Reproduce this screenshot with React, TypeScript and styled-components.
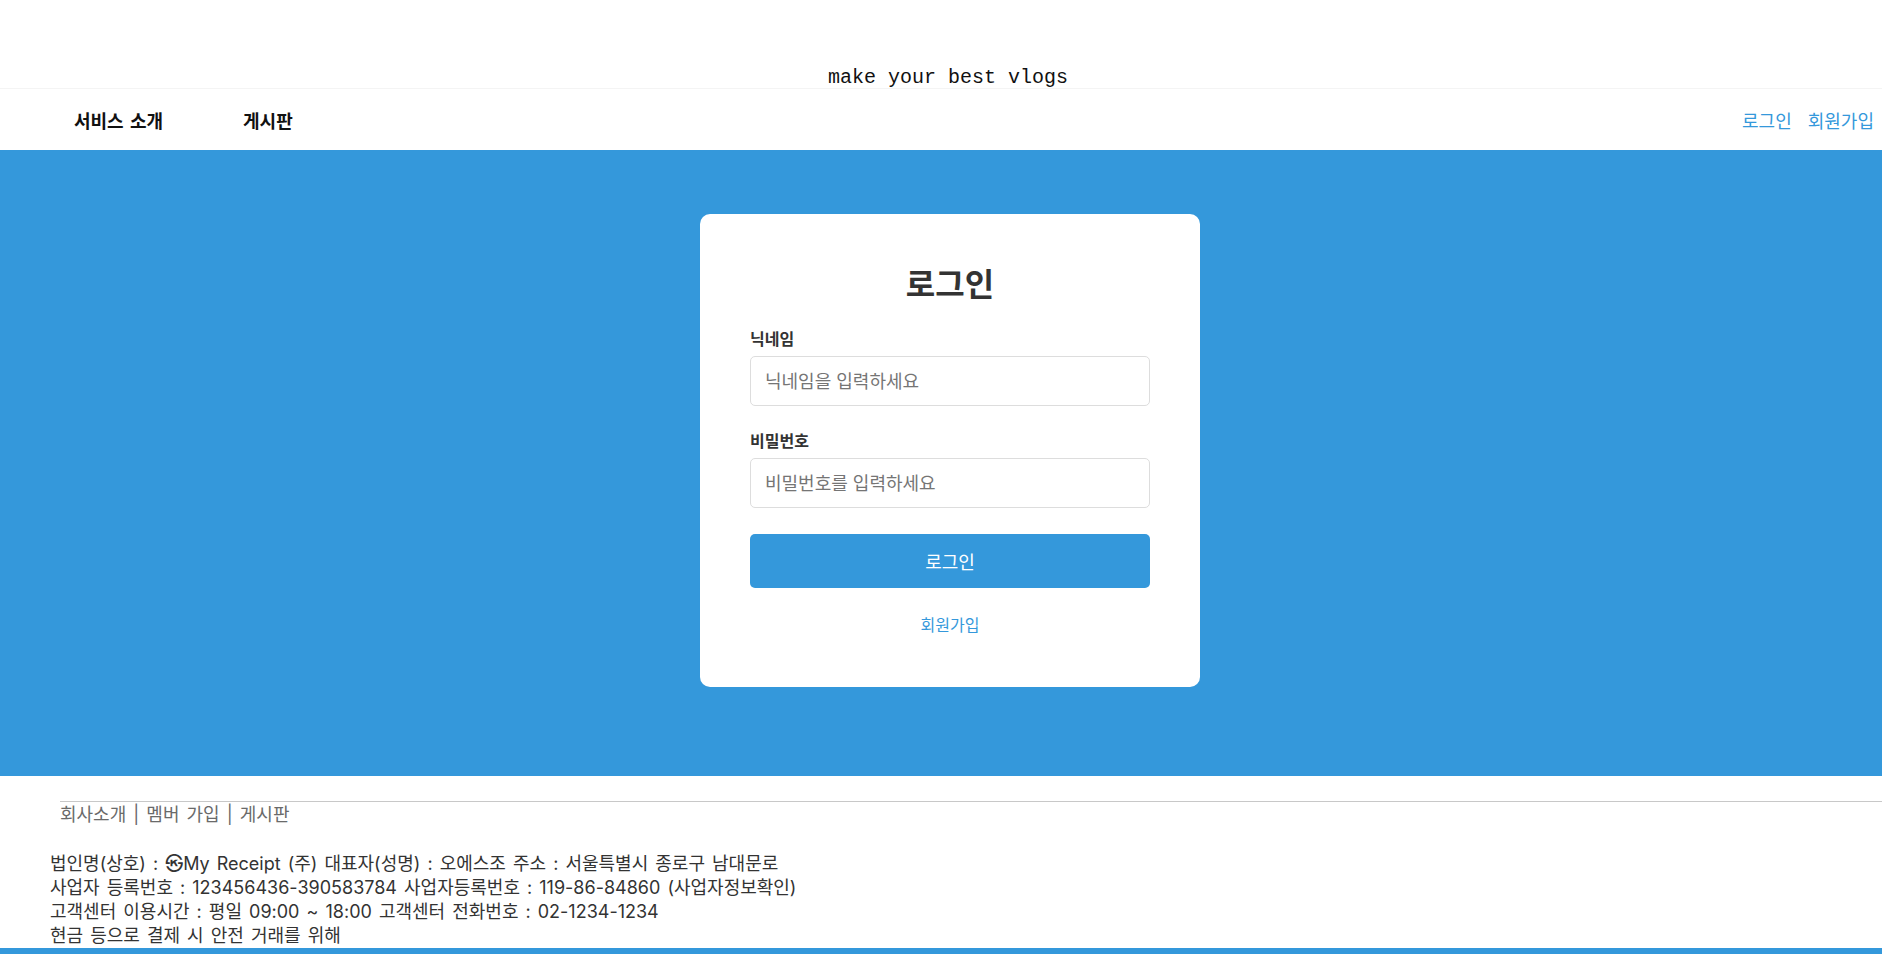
import React from "react";
import styled, { createGlobalStyle } from "styled-components";

const GlobalStyle = createGlobalStyle`
  html, body {
    margin: 0;
    padding: 0;
    background: #ffffff;
    font-family: "Inter", "Noto Sans CJK KR", sans-serif;
    color: #333333;
  }
  * { box-sizing: border-box; }
`;

const Page = styled.div`
  width: 100%;
  overflow: hidden;
`;

const Header = styled.header`
  height: 88px;
  display: flex;
  align-items: flex-end;
  justify-content: center;
  padding-left: 14px;
`;

const Slogan = styled.p`
  margin: 0 0 -1px 0;
  font-family: "Liberation Mono", "Courier New", monospace;
  font-size: 20px;
  line-height: 22px;
  color: #111111;
`;

const Nav = styled.nav`
  height: 62px;
  display: flex;
  align-items: center;
  justify-content: space-between;
  border-top: 1px solid #f4f4f4;
  padding: 0 8px 0 74px;
`;

const NavGroup = styled.div<{ $gap: number }>`
  display: flex;
  align-items: center;
  gap: ${(p) => p.$gap}px;
`;

const NavItem = styled.a`
  font-size: 18px;
  font-weight: 700;
  color: #111111;
  text-decoration: none;
  word-spacing: 2px;
  cursor: pointer;
`;

const NavLink = styled.a`
  font-size: 18px;
  font-weight: 400;
  color: #3498db;
  text-decoration: none;
  cursor: pointer;
`;

const Main = styled.main`
  background: #3498db;
  padding: 64px 0 89px 18px;
  display: flex;
  justify-content: center;
`;

const Card = styled.div`
  width: 500px;
  background: #ffffff;
  border-radius: 10px;
  padding: 50px 50px 50px;
`;

const Title = styled.h2`
  margin: 0 0 22px;
  text-align: center;
  font-size: 32px;
  line-height: 42px;
  font-weight: 700;
  color: #333333;
`;

const Group = styled.div<{ $mb: number }>`
  margin-bottom: ${(p) => p.$mb}px;
`;

const Label = styled.label`
  display: block;
  font-size: 16px;
  line-height: 23px;
  font-weight: 700;
  color: #333333;
  margin-bottom: 5px;
`;

const Input = styled.input`
  display: block;
  width: 100%;
  height: 50px;
  padding: 0 14px;
  border: 1px solid #dddddd;
  border-radius: 5px;
  font-family: "Inter", "Noto Sans CJK KR", sans-serif;
  font-size: 18px;
  color: #333333;
  outline: none;
  &::placeholder {
    color: #757575;
  }
`;

const Button = styled.button`
  display: block;
  width: 100%;
  height: 54px;
  border: none;
  border-radius: 5px;
  background: #3498db;
  color: #ffffff;
  font-family: "Inter", "Noto Sans CJK KR", sans-serif;
  font-size: 18px;
  cursor: pointer;
`;

const SignupRow = styled.div`
  margin-top: 26px;
  text-align: center;
  line-height: 23px;
`;

const SignupLink = styled.a`
  font-size: 16px;
  color: #3498db;
  text-decoration: none;
  cursor: pointer;
`;

const Footer = styled.footer`
  padding-top: 25px;
`;

const Rule = styled.hr`
  margin: 0 0 0 60px;
  border: none;
  border-top: 1px solid #c8c8c8;
  height: 0;
`;

const FooterLinks = styled.div`
  margin-left: 60px;
  font-size: 18px;
  line-height: 25px;
  word-spacing: 2px;
  color: #6a6a6a;
`;

const Info = styled.div`
  margin: 25px 0 0 50px;
  font-size: 18px;
  word-spacing: 2px;
  color: #333333;
  line-height: 24px;
`;

const BottomBar = styled.div`
  height: 6px;
  background: #3498db;
`;

export default function App() {
  return (
    <Page>
      <GlobalStyle />
      <Header>
        <Slogan>make your best vlogs</Slogan>
      </Header>
      <Nav>
        <NavGroup $gap={80}>
          <NavItem>서비스 소개</NavItem>
          <NavItem>게시판</NavItem>
        </NavGroup>
        <NavGroup $gap={16}>
          <NavLink>로그인</NavLink>
          <NavLink>회원가입</NavLink>
        </NavGroup>
      </Nav>
      <Main>
        <Card>
          <Title>로그인</Title>
          <Group $mb={24}>
            <Label>닉네임</Label>
            <Input type="text" placeholder="닉네임을 입력하세요" />
          </Group>
          <Group $mb={26}>
            <Label>비밀번호</Label>
            <Input type="password" placeholder="비밀번호를 입력하세요" />
          </Group>
          <Button>로그인</Button>
          <SignupRow>
            <SignupLink>회원가입</SignupLink>
          </SignupRow>
        </Card>
      </Main>
      <Footer>
        <Rule />
        <FooterLinks>회사소개 | 멤버 가입 | 게시판</FooterLinks>
        <Info>
          <div>법인명(상호) : ㉿My Receipt (주) 대표자(성명) : 오에스조 주소 : 서울특별시 종로구 남대문로</div>
          <div>사업자 등록번호 : 123456436-390583784 사업자등록번호 : 119-86-84860 (사업자정보확인)</div>
          <div>고객센터 이용시간 : 평일 09:00 ~ 18:00 고객센터 전화번호 : 02-1234-1234</div>
          <div>현금 등으로 결제 시 안전 거래를 위해</div>
        </Info>
        <BottomBar />
      </Footer>
    </Page>
  );
}
